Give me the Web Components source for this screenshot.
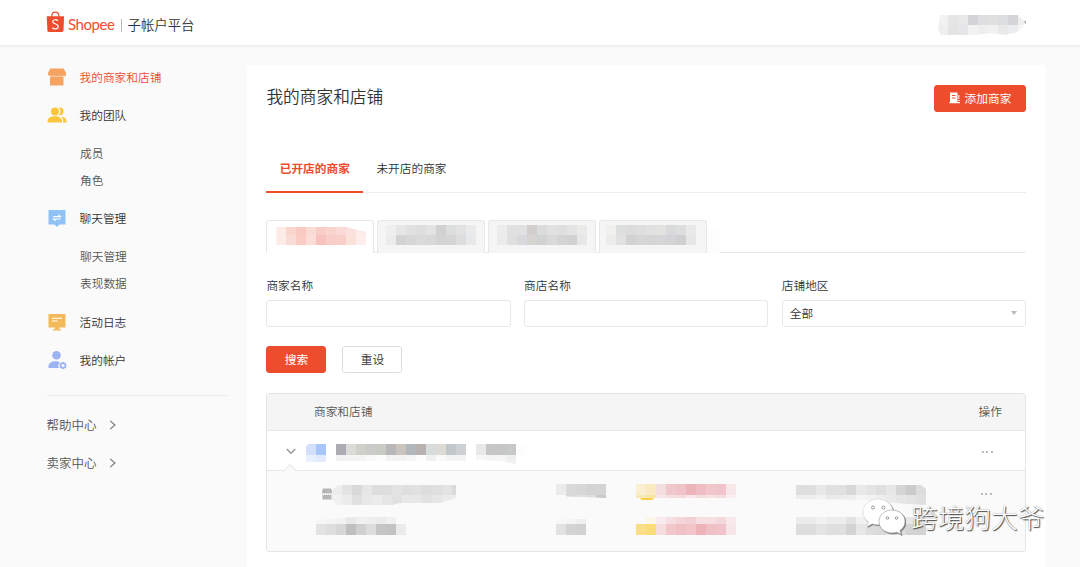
<!DOCTYPE html>
<html lang="zh-CN">
<head>
<meta charset="utf-8">
<title>子帐户平台</title>
<style>
  html, body {
    margin: 0;
    height: 567px;
    overflow: hidden;
  }

  body {
    --primary: #ee4d2d;
    --line: #e8e8e8;
    font: 350 11.7px/18px "Noto Sans CJK SC", "Liberation Sans", sans-serif;
    color: #333;
    background: #fafafa;
  }
</style>
</head>
<body>
<seller-app></seller-app>

<script>
const icons = {
  shop: `<svg width="20" height="20" viewBox="0 0 20 20" fill="#f6a261">
    <path d="M3.300 1.500h13.400L19 6v2.200q-1.100 1.500-2.200.300-1.300 1.500-2.700 0-1.400 1.500-2.700 0-1.400 1.500-2.800 0-1.300 1.500-2.700 0-1.300 1.500-2.600 0Q2.100 9.200 1 8V6z"/>
    <path d="M3 9.600q1.300.5 2.700-.5 1.400 1.300 2.800 0 1.400 1.300 2.800 0 1.400 1.300 2.700 0 1.300 1.200 2.500.5v8.900H3z"/></svg>`,
  team: `<svg width="20" height="20" viewBox="0 0 20 20" fill="#fac63c">
    <circle cx="8" cy="6.500" r="4"/><path d="M.500 17.500v-1c0-3.600 3.400-5.300 7.300-5.300s7.200 1.700 7.200 5.300v1z"/>
    <path d="M11.600 2.600c3.600-.5 5 1.300 5 3.700 0 2.800-1.900 4.400-4.800 4.200 2.200-2.200 2.200-5.700-.2-7.900zM14 11.500c3.600.2 5.500 2.200 5.500 5v1h-3.300c.1-2.700-.3-4.300-2.200-6z"/></svg>`,
  chat: `<svg width="20" height="20" viewBox="0 0 20 20">
    <path d="M1.500 2h17v14.500h-6L10 19l-2.500-2.500h-6z" fill="#91c2f5"/>
    <path d="M6.300 8.600h7.200L11.400 6.700M13.500 11H6.500l2 1.900" stroke="#fff" stroke-width="1.100" fill="none"/></svg>`,
  log: `<svg width="20" height="20" viewBox="0 0 20 20">
    <path d="M1.500 2h17v13.500h-6.300v1.700h2v1.200H5.800v-1.200h2v-1.700H1.500z" fill="#f4ba5a"/>
    <path d="M5 6.300h10M5 9h5.500" stroke="#fff" stroke-width="1.100"/></svg>`,
  account: `<svg width="20" height="20" viewBox="0 0 20 20" fill="#9db4f2">
    <circle cx="9.500" cy="5.300" r="4.300"/>
    <path d="M1.500 18v-1.200c0-3.800 3-5.600 7-5.600 1.900 0 3.400.4 4.600 1.100-1.900 1.500-2.200 3.600-1.200 5.700z"/>
    <path d="m16 11.700 3.200 1.800v3.900L16 19.200l-3.300-1.800v-3.900z"/><circle cx="16" cy="15.500" r="1.500" fill="#fafafa"/></svg>`,
  right: `<svg width="8" height="10" viewBox="0 0 8 10" fill="none" stroke="#777" stroke-width="1.100"><path d="m1.200 .8 4.700 4.200-4.700 4.200"/></svg>`,
  down: `<svg width="10" height="7" viewBox="0 0 10 7" fill="none" stroke="#999" stroke-width="1.400"><path d="m.7 1 4.300 4.300L9.300 1"/></svg>`,
  store: `<svg width="12" height="12" viewBox="0 0 12 12" fill="#b5b5b5"><path d="M2 .500h8l1 3v1.800H1V3.500zM1.500 7h9v4.500h-9z"/><path d="M1 6.200h10" stroke="#ccc" stroke-dasharray="1 1"/></svg>`,
  merchant: `<svg width="12" height="12" viewBox="0 0 12 12" fill="#fff">
    <path fill-rule="evenodd" d="M1 .5h7.500V10H11v1.300H.200V10H1zM3 3v1h3.500V3zm0 2.500v1h3.500v-1z"/><path d="M9.300 3h1v4h-1zM9.300 8h1.500v1H9.300z"/></svg>`,
  logo: `<svg width="19" height="22" viewBox="0 0 19 22">
    <path d="M5.700 6C5.700 3 7.200 1.200 9.300 1.200S13 3 13 6" fill="none" stroke="#ee4d2d" stroke-width="1.200"/>
    <path d="M.700 5.300h17.400l-.6 14.200q-.1 1.500-1.800 1.500H3.200q-1.700 0-1.800-1.500z" fill="#ee4d2d"/>
    <path d="M12 9.800C10.300 8.200 6.800 8.300 6.700 10.700c0 2.500 5.500 1.700 5.500 4.800 0 2.800-4 3.100-6 1.200" fill="none" stroke="#fff" stroke-width="1.200"/></svg>`
}

const define = (name, render) => {
  customElements.define(name, class extends HTMLElement {
    constructor() {
      super()
      this.attachShadow({ mode: 'open' })
    }

    connectedCallback() {
      this.shadowRoot.innerHTML = render(this)
    }
  })
}

define('app-icon', el => `
  <style>
    :host { display: inline-flex; flex: none; }
    svg { display: block; }
  </style>${icons[el.getAttribute('name')]}`)

// rows="height: color color ...; height: color ..." with 10px wide cells, "-" leaves a cell empty
define('mosaic-strip', el => {
  const rows = el.getAttribute('rows').split(';').map(row => {
    const [height, colors] = row.split(':')
    const cells = colors.trim().split(/\s+/)
      .map(c => `<i style="background:${c === '-' ? 'none' : '#' + c}"></i>`).join('')
    return `<div style="height:${height.trim()}px">${cells}</div>`
  }).join('')
  return `
  <style>
    :host { display: block; flex: none; }
    div { display: flex; }
    i { flex: none; width: 10px; }
  </style>${rows}`
})

define('app-header', () => `
  <style>
    :host {
      display: flex;
      box-sizing: border-box;
      height: 45px;
      padding: 0 54px 0 46px;
      background: #fff;
      box-shadow: 0 1px 3px rgba(0, 0, 0, .09);
    }
    app-icon { margin-top: 11px; }
    .brand {
      font: 15px/20px Lato, sans-serif;
      letter-spacing: -.45px;
      margin: 14px 0 0 3px;
      width: 47px;
      color: var(--primary);
    }
    .bar { width: 1px; height: 13px; margin: 19px 5.500px 0 6px; background: #bbb; }
    .name { font-size: 13.400px; line-height: 20px; margin-top: 14px; }
    .user { display: flex; margin: 15px 0 0 auto; }
    mosaic-strip { width: 88px; clip-path: polygon(2px 0, 80px 0, 88px 8px, 80px 17px, 68px 20px, 52px 18px, 38px 20px, 3px 20px, 0 15px); }
    .caret { width: 2px; height: 3px; margin: 6px 0 0 -2px; background: #555; border-radius: 0 2px 2px 0; }
  </style>
  <app-icon name="logo"></app-icon>
  <span class="brand">Shopee</span><span class="bar"></span><span class="name">子帐户平台</span>
  <div class="user">
    <mosaic-strip rows="10: f2f2f2 e6e6e6 e8e8e8 d4d3d5 dfdfe1 e0e0e0 dddee0 d5d5d8 efefef; 10: efefef e4e3e3 e6e6e8 f2f2f2 eeeeee f1f1f1 e9e9e9 ecedee f5f5f5"></mosaic-strip>
    <span class="caret"></span>
  </div>`)

define('nav-item', el => `
  <style>
    :host { display: flex; align-items: center; height: 38px; gap: 13px; }
    :host([active]) { color: var(--primary); }
    :host([sub]) { height: 27px; padding-left: 33px; color: #555; }
    :host([link]) { height: 37.500px; font-size: 12.500px; color: #555; gap: 12px; }
  </style>
  ${el.hasAttribute('icon') ? `<app-icon name="${el.getAttribute('icon')}"></app-icon>` : ''}
  <slot></slot>
  ${el.hasAttribute('link') ? '<app-icon name="right"></app-icon>' : ''}`)

define('side-nav', () => `
  <style>
    :host { display: block; width: 180.500px; padding: 13px 20px 0 46.500px; }
    .group { padding: 5px 0 6px .500px; }
    .group.last { padding-bottom: 7px; }
    hr { border: 0; height: 1px; margin: 15.500px 0 11px; background: #e9e9e9; }
  </style>
  <nav-item icon="shop" active>我的商家和店铺</nav-item>
  <nav-item icon="team">我的团队</nav-item>
  <div class="group"><nav-item sub>成员</nav-item><nav-item sub>角色</nav-item></div>
  <nav-item icon="chat">聊天管理</nav-item>
  <div class="group last"><nav-item sub>聊天管理</nav-item><nav-item sub>表现数据</nav-item></div>
  <nav-item icon="log">活动日志</nav-item>
  <nav-item icon="account">我的帐户</nav-item>
  <hr>
  <nav-item link>帮助中心</nav-item>
  <nav-item link>卖家中心</nav-item>`)

define('ui-button', () => `
  <style>
    :host {
      display: inline-flex;
      align-items: center;
      justify-content: center;
      box-sizing: border-box;
      height: 27px;
      width: 60px;
      padding-bottom: 2px;
      border: 1px solid #ddd;
      border-radius: 3px;
      background: #fff;
    }
    :host([primary]) { border-color: var(--primary); background: var(--primary); color: #fff; font-weight: 400; }
  </style><slot></slot>`)

define('form-field', el => `
  <style>
    :host { display: block; }
    label { display: block; height: 18px; margin-bottom: 6px; }
    .box {
      display: flex;
      align-items: center;
      justify-content: space-between;
      box-sizing: border-box;
      height: 27px;
      padding: 0 8px 1px 7px;
      border: 1px solid var(--line);
      border-radius: 3px;
    }
    .arrow { border: 3px solid transparent; border-top: 4px solid #bbb; border-bottom: 0; }
  </style>
  <label>${el.getAttribute('label')}</label>
  <div class="box"><slot></slot>${el.hasAttribute('select') ? '<span class="arrow"></span>' : ''}</div>`)

define('page-tabs', () => `
  <style>
    :host { display: flex; height: 47px; margin-top: 34px; box-shadow: inset 0 -1px #ececec; }
    span { box-sizing: border-box; padding: 13px 13.300px 0; }
    .on { color: var(--primary); font-weight: 700; border-bottom: 2px solid var(--primary); }
  </style>
  <span class="on">已开店的商家</span><span>未开店的商家</span>`)

define('region-tabs', () => `
  <style>
    :host { display: flex; gap: 3px; height: 33px; margin-top: 27px; box-shadow: inset 0 -1px #e9e9e9; }
    div {
      display: flex;
      box-sizing: border-box;
      width: 108px;
      padding: 4px 0 0 8px;
      border: 1px solid var(--line);
      border-bottom: 0;
      border-radius: 3px 3px 0 0;
      background: #f5f5f5;
    }
    div:nth-of-type(4) { padding-left: 6px; }
    .on { background: #fff; padding: 6px 0 0 9px; }
    .on mosaic-strip { clip-path: polygon(0 0, 70px 0, 90px 5px, 90px 100%, 0 100%); }
    .fade { width: 13px; margin: 8px 0 0 -3px; background: #fdfdfd; }
  </style>
  <div class="on"><mosaic-strip rows="8: fdebe8 fad5ce f8c9c1 fadbd6 f9cdc7 f9d4ce fbdad5 fae1dd fdebe9; 10: fdebe8 fadcd6 f9ccc5 fbdcd7 f8c3bc f9cec8 f9cfc9 fae1d9 fdeeed"></mosaic-strip></div>
  <div><mosaic-strip rows="10: efefef e5e6e7 e0e0e0 dedede e3e3e1 d1d1d1 dcdddd e2e2e2 e8eaeb; 10: ececec d3d3d3 d7d7d7 dadadc d8d8d6 d3d3d3 d5d5d7 dddddd e6e8e9"></mosaic-strip></div>
  <div><mosaic-strip rows="10: ececec e0e0e0 e1e1e1 d0cfcd d9dbdd e2e1e0 dfdfdf e4e4e5 eaeae9; 10: ebebeb dfdfdf d8d9dc d5d4d0 d1d2d4 dadada d6d3d4 d0d2d3 e7e7e7"></mosaic-strip></div>
  <div><mosaic-strip rows="10: f0f0ef dddfde dcdcda dededf e1e1e1 e2e2e1 d9dadc dddfdf e9e9e9; 10: ececeb e1e1e1 d2d2d2 d6d6d6 d5d5d5 d6d6d8 d4d4d6 d0d0d2 e5e7e7"></mosaic-strip></div>
  <span class="fade"></span>`)

define('more-dots', () => `
  <style>
    :host { display: flex; gap: 2.500px; }
    i { width: 2px; height: 1.500px; background: #bbb; }
  </style><i></i><i></i><i></i>`)

define('shop-table', () => `
  <style>
    :host {
      display: block;
      box-sizing: border-box;
      height: 159px;
      margin-top: 20px;
      border: 1px solid #e5e5e5;
      border-radius: 3px;
      overflow: hidden;
      background: #fafafa;
    }
    .head {
      display: flex;
      justify-content: space-between;
      box-sizing: border-box;
      height: 37px;
      padding: 8px 23px 0 46.600px;
      border-bottom: 1px solid #e8e8e8;
      background: #f5f5f5;
      color: #555;
    }
    .row { display: flex; height: 39px; padding-left: 18.600px; background: #fff; border-bottom: 1px solid #e8e8e8; }
    .row > app-icon { margin-top: 17px; }
    .row mosaic-strip { margin-top: 13px; margin-left: 10px; }
    .row more-dots { margin: 20px 32px 0 auto; }
    .notch {
      width: 9px;
      height: 9px;
      margin: -5px 0 -5px 18px;
      border: solid #e8e8e8;
      border-width: 1px 0 0 1px;
      background: #fafafa;
      transform: rotate(45deg);
    }
    .sub { display: grid; grid-template-columns: 240px 80px 160px 185px 1fr; padding-left: 48.600px; height: 33px; }
    .shop { display: flex; padding-left: 5px; }
    .shop app-icon { margin: 4px 3px 0 0; }
    .first { padding-top: 13px; }
    .first more-dots { margin: 9px 0 0; }
  </style>
  <div class="head"><span>商家和店铺</span><span>操作</span></div>
  <div class="row">
    <app-icon name="down"></app-icon>
    <mosaic-strip rows="11: d2e0fb a9c6fa; 7: e8effd e2eafc" style="border-radius:4px 0 0 8px;overflow:hidden"></mosaic-strip>
    <mosaic-strip rows="11: acacb2 dcdbd7 cfd0ca cbcbca c9cbc5 bab7b9 c9c4bd b2b7be b7b2b0 d8dddc dedad5 c2c7ca cdd1d4; 6: f2f2f2 f3f3f3 f4f4f2 f9f9f9 fdfdfd f4f4f4 f3f3f3 f6f6f6 fdfdfd f0f2f1 f9f9f9 f3f5f5 f3f4f5"></mosaic-strip>
    <mosaic-strip rows="11: e9e9e8 c6c6c6 c5c5c5 c7c8c8 fdfdff; 9: f6f6f6 f4f4f4 f5f5f5 eeefef -" style="clip-path:polygon(0 0,50px 0,50px 11px,40px 11px,40px 20px,25px 17px,0 16px)"></mosaic-strip>
    <more-dots></more-dots>
  </div>
  <div class="notch"></div>
  <div class="sub first">
    <div class="shop">
      <app-icon name="store"></app-icon>
      <mosaic-strip style="margin:1px 0 0 -4px;clip-path:polygon(6px 0,124px 0,124px 13px,108px 18px,68px 18px,60px 20px,5px 20px,0 15px,0 5px)" rows="10: ededed e3e3e3 d9d9d9 e6e6e6 dddddd dedede e3e3e3 dfdfdf e1e1e1 dddddd dfdfdf e3e3e3 d9d9d9; 10: f1f1f1 ececec e1e1e1 e8e8e8 ececec e6e6e6 e1e1e1 e8e8e8 e7e7e7 e1e1e1 e6e6e6 ebebeb ececec"></mosaic-strip>
    </div>
    <mosaic-strip rows="11: ebebeb dadada d7d7d7 d3d3d3 d4d4d4; 3: fafafa d8d8d8 e0e0e0 dedede c9c9c9" style="clip-path:polygon(0 0,50px 0,50px 14px,0 12px)"></mosaic-strip>
    <mosaic-strip rows="11: faefd0 f9eac1 f4dfe0 f0c7cb efc3c8 edb4ba efbdc3 f1c7cc f0c4ca f7e7e8; 3: f9e9b4 f9e5a5 f6e6e7 f6dfe1 f5dbde f8e6e8 f4dddf f7e2e4 f5dcdf f9eff0; 2: fbcf47 fbcf47 - - - - - - - -" style="clip-path:polygon(0 0,100% 0,100% 14px,18px 14px,16px 16px,6px 16px,4px 14px,0 14px)"></mosaic-strip>
    <mosaic-strip style="margin-top:1px;clip-path:polygon(0 0,125px 0,130px 4px,130px 20px,110px 19px,70px 15px,0 14px)" rows="10: dedede dfdfdf e8e8e8 e0e0e0 e0e0e0 d8d8d8 e9e9e9 e4e4e4 dfdfdf e7e7e7 d5d5d5 cbcbcb dcdcdc; 10: eeeeee eeeeee f2f2f2 eaeaea ebebeb eeeeee f5f5f5 f2f2f2 eeeeee eaeaea e6e6e6 e3e3e3 e0e0e0"></mosaic-strip>
    <more-dots></more-dots>
  </div>
  <div class="sub">
    <mosaic-strip rows="7: f6f6f6 f4f4f4 f2f2f2 e8e8e8 f0f0f0 eeeeee ebebeb f0f0f0 -; 11: e3e3e3 dedede d7d7d7 bfbfbf d0d0d0 dddddd c5c5c5 c3c3c3 ebebeb" style="clip-path:polygon(0 3px,40px 0,80px 0,80px 7px,90px 7px,90px 100%,0 100%)"></mosaic-strip>
    <mosaic-strip rows="2: -; 5: f7f7f7 f5f5f5 efefef; 11: e2e2e2 d4d4d4 d1d1d1"></mosaic-strip>
    <mosaic-strip rows="7: fafafa faf6e8 f8ebed f6dfe2 f4d6da f2d0d5 f6e0e3 f6dfe2 f4d8dc f8eaec; 11: fadf88 fadc78 f4dcdf f1c7cc efc1c7 f1c5ca edb3b9 efc0c6 f0c4ca f7e6e8"></mosaic-strip>
    <mosaic-strip rows="7: ebebeb ebebeb f1f1f1 ececec ededed e3e3e3 f1f1f1 ededed ebebeb f2f2f2 eeeeee e8e8e8 e4e4e4; 11: dddddd dddddd e4e4e4 dfdfdf dfdfdf d4d4d4 e7e7e7 dddddd dadada e3e3e3 dddddd d4d4d4 d2d2d2"></mosaic-strip>
  </div>`)

define('main-panel', () => `
  <style>
    :host { display: block; width: 759.600px; margin-top: 20px; padding: 20px 20px 0 19.400px; background: #fff; }
    .top { display: flex; justify-content: space-between; align-items: flex-start; height: 27px; }
    h1 { margin: -1px 0 0; font-size: 16.700px; line-height: 24px; font-weight: 350; }
    .top ui-button { width: 92px; gap: 4px; }
    .form { display: grid; grid-template-columns: repeat(3, 1fr); gap: 13.500px; margin-top: 23px; }
    .actions { display: flex; gap: 16px; margin-top: 19px; }
  </style>
  <div class="top">
    <h1>我的商家和店铺</h1>
    <ui-button primary><app-icon name="merchant"></app-icon>添加商家</ui-button>
  </div>
  <page-tabs></page-tabs>
  <region-tabs></region-tabs>
  <div class="form">
    <form-field label="商家名称"></form-field>
    <form-field label="商店名称"></form-field>
    <form-field label="店铺地区" select>全部</form-field>
  </div>
  <div class="actions"><ui-button primary>搜索</ui-button><ui-button>重设</ui-button></div>
  <shop-table></shop-table>`)

define('channel-mark', () => `
  <style>
    :host { position: absolute; left: 862px; top: 496px; display: flex; align-items: center; }
    svg { filter: drop-shadow(1px 1px .5px #777); }
    span {
      margin-left: 6px;
      font-size: 26.700px;
      font-weight: 300;
      line-height: 42px;
      white-space: nowrap;
      color: #fff;
      text-shadow: 1px 1px 1px #444, 0 0 1px #888;
    }
  </style>
  <svg width="43" height="39" viewBox="0 0 43 39">
    <path d="M16 1C7.500 1 1 6.800 1 14c0 4.200 2 7.500 5.500 10L5 28.500l5.200-2.700c2 .6 3.900.9 6.200.9C24.500 26.500 31 21 31 14S24.500 1 16 1z" fill="#fff" stroke="#ccc" stroke-width=".5"/>
    <path d="M30 12c-7.500 0-13 5-13 11.500S22.500 35 30 35c1.700 0 3.300-.2 4.800-.8l4.400 2.400-1.300-4C41 30.500 43 27.500 43 23.500 43 17 37.500 12 30 12z" fill="#fff" stroke="#999" stroke-width=".6"/>
    <g fill="#fff" stroke="#999"><circle cx="11" cy="9.500" r="1.500"/><circle cx="21.500" cy="9.500" r="1.500"/><circle cx="25.500" cy="20" r="1.300"/><circle cx="34.500" cy="20" r="1.300"/></g>
  </svg>
  <span>跨境狗大爷</span>`)

define('seller-app', () => `
  <style>
    :host { display: block; height: 567px; overflow: hidden; }
    main { display: flex; height: 522px; }
  </style>
  <app-header></app-header>
  <main><side-nav></side-nav><main-panel></main-panel></main>
  <channel-mark></channel-mark>`)
</script>
</body>
</html>
